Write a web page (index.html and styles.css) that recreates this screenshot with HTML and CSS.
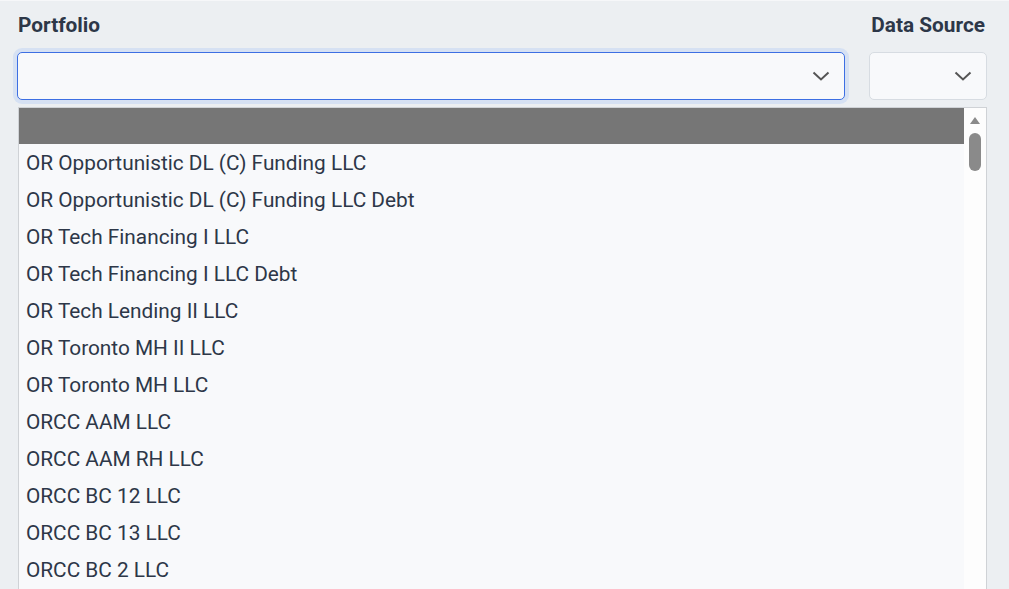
FILE: index.html
```html
<!DOCTYPE html>
<html lang="en">
<head>
    <meta charset="UTF-8">
    <meta name="viewport" content="width=device-width, initial-scale=1.0">
    <title>Portfolio Filter</title>
    <link rel="stylesheet" href="styles.css">
</head>
<body>
    <div class="filters">
        <!-- Portfolio select (focused, list open) -->
        <div class="field">
            <label class="field-label">Portfolio</label>
            <div class="select select-focused">
                <span class="select-value"></span>
                <svg class="chevron" width="18" height="10" viewBox="0 0 18 10"><path d="M1.5 1.5 L9 8.5 L16.5 1.5" fill="none" stroke="#555" stroke-width="2"/></svg>
            </div>
        </div>

        <!-- Data source select -->
        <div class="field field-right">
            <label class="field-label">Data Source</label>
            <div class="select">
                <span class="select-value"></span>
                <svg class="chevron" width="18" height="10" viewBox="0 0 18 10"><path d="M1.5 1.5 L9 8.5 L16.5 1.5" fill="none" stroke="#555" stroke-width="2"/></svg>
            </div>
        </div>
    </div>

    <!-- Open options list -->
    <div class="dropdown">
        <ul class="options">
            <li class="option option-selected">&nbsp;</li>
            <li class="option">OR Opportunistic DL (C) Funding LLC</li>
            <li class="option">OR Opportunistic DL (C) Funding LLC Debt</li>
            <li class="option">OR Tech Financing I LLC</li>
            <li class="option">OR Tech Financing I LLC Debt</li>
            <li class="option">OR Tech Lending II LLC</li>
            <li class="option">OR Toronto MH II LLC</li>
            <li class="option">OR Toronto MH LLC</li>
            <li class="option">ORCC AAM LLC</li>
            <li class="option">ORCC AAM RH LLC</li>
            <li class="option">ORCC BC 12 LLC</li>
            <li class="option">ORCC BC 13 LLC</li>
            <li class="option">ORCC BC 2 LLC</li>
        </ul>
        <div class="scrollbar">
            <span class="scroll-arrow"></span>
            <span class="scroll-thumb"></span>
        </div>
    </div>
</body>
</html>
```

FILE: styles.css
```css
* {
    margin: 0;
    padding: 0;
    box-sizing: border-box;
}

html, body {
    height: 100%;
    overflow: hidden;
}

body {
    font-family: Roboto, 'Liberation Sans', sans-serif;
    background-color: #eceff2;
    border-top: 1px solid #f6f7f9;
    color: #2d3748;
}

/* Filter row */
.filters {
    display: grid;
    grid-template-columns: 1fr 118px;
    column-gap: 24px;
    padding: 10px 22px 0 17px;
}

.field {
    display: flex;
    flex-direction: column;
}

.field-right .field-label {
    text-align: right;
    margin-right: 2px;
}

.field-label {
    font-size: 20.8px;
    font-weight: bold;
    color: #2d3748;
    height: 41px;
    padding-left: 1px;
    line-height: 28px;
    white-space: nowrap;
}

.select {
    display: flex;
    align-items: center;
    justify-content: flex-end;
    height: 48px;
    padding: 0 14px;
    background-color: #f8f9fb;
    border: 1px solid #d7dce2;
    border-radius: 5px;
}

.select-focused {
    border-color: #3d6fe3;
    box-shadow: 0 0 0 4px #d6e1f3;
}

.chevron {
    display: block;
}

/* Options list */
.dropdown {
    display: flex;
    margin: 7px 22px 0 18px;
    height: 490px;
    background-color: #f8f9fb;
    border: 1px solid #cfd2d6;
    border-bottom: none;
    overflow: hidden;
}

.options {
    flex: 1;
    list-style: none;
}

.option {
    height: 37px;
    padding: 2px 0 0 7px;
    line-height: 35px;
    font-size: 20.8px;
    color: #2d3748;
    white-space: nowrap;
}

.option-selected {
    height: 36px;
    background-color: #767676;
}

.scrollbar {
    width: 22px;
    background-color: #fdfdfd;
    display: flex;
    flex-direction: column;
    align-items: center;
    padding-top: 9px;
}

.scroll-arrow {
    width: 0;
    height: 0;
    border-left: 5px solid transparent;
    border-right: 5px solid transparent;
    border-bottom: 7px solid #8a8a8a;
}

.scroll-thumb {
    width: 12px;
    height: 38px;
    margin-top: 9px;
    border-radius: 6px;
    background-color: #8a8a8a;
}
```
